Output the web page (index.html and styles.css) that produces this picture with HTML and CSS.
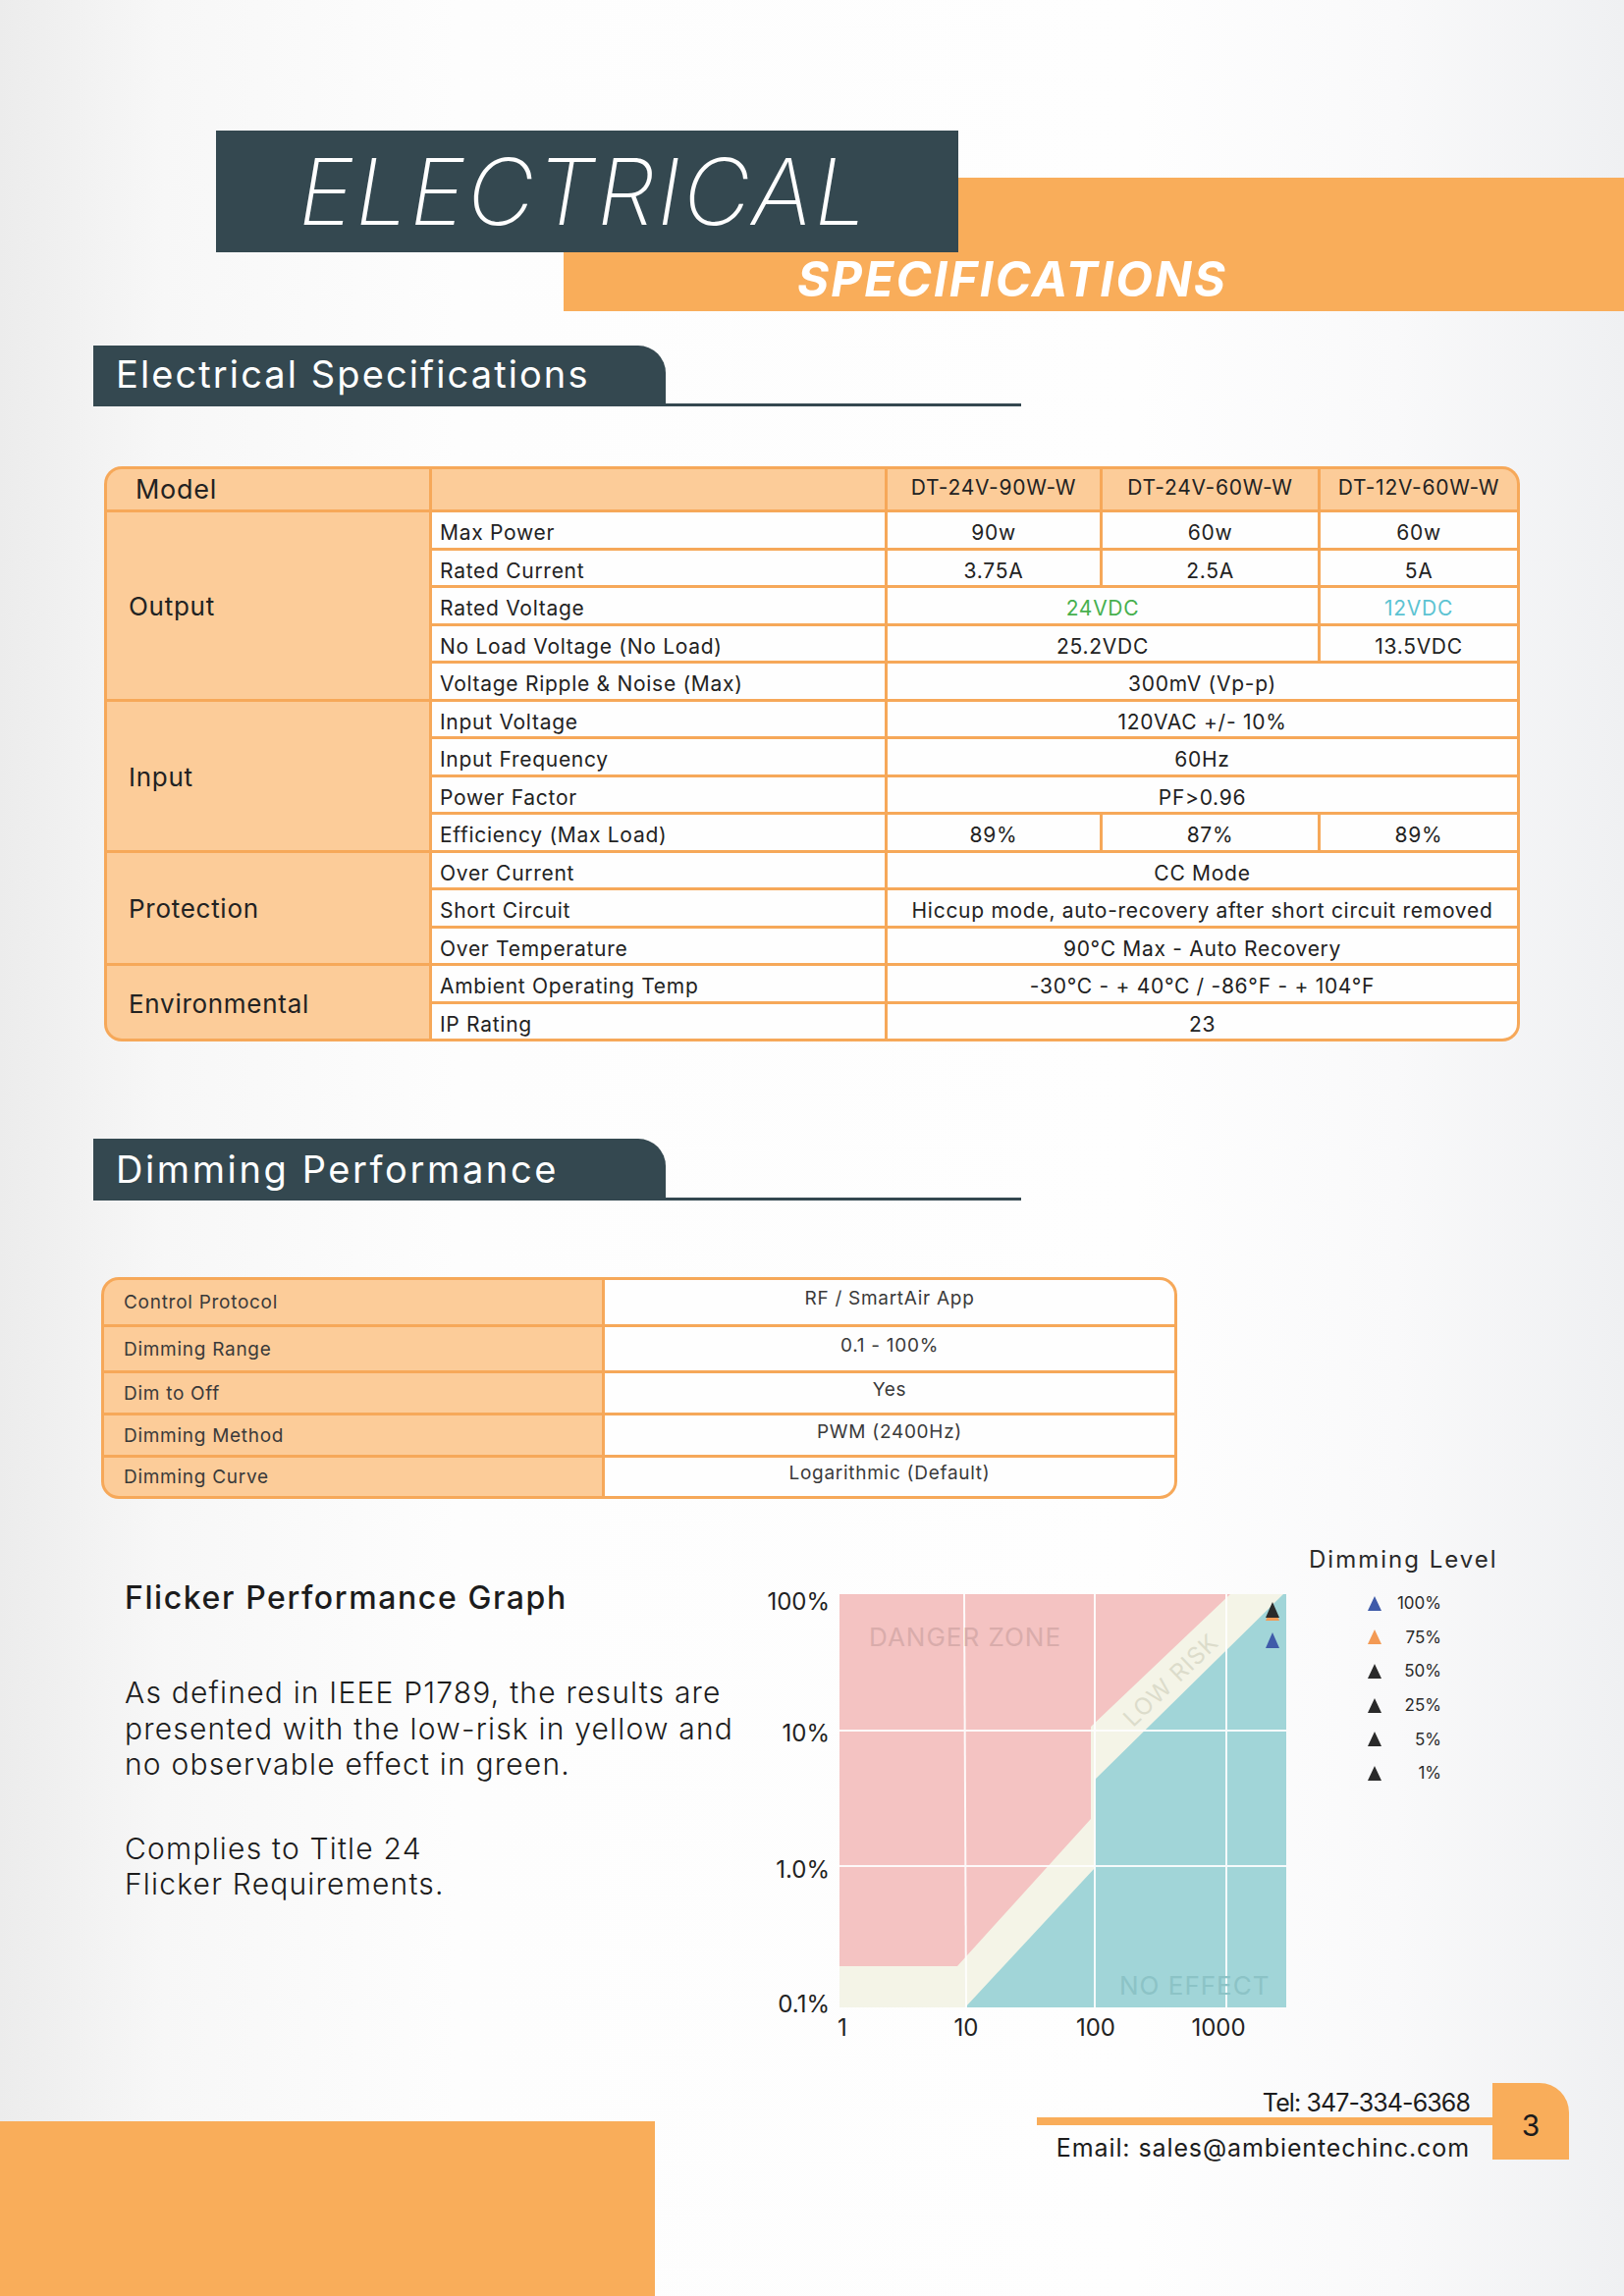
FILE: index.html
```html
<!DOCTYPE html>
<html lang="en">
<head>
<meta charset="utf-8">
<title>Electrical Specifications</title>
<link rel="stylesheet" href="styles.css">
</head>
<body>
<div class="page">
  <header class="hero">
    <div class="hero-dark"><h1 class="hero-title">ELECTRICAL</h1></div>
    <div class="hero-orange"><div class="hero-sub">SPECIFICATIONS</div></div>
  </header>

  <div class="sec-head sec-elec"><h2 class="sec-tab">Electrical Specifications</h2></div>

  <div class="spec">
    <div class="cell hd model tl">Model</div>
    <div class="cell hd"></div>
    <div class="cell hd">DT-24V-90W-W</div>
    <div class="cell hd">DT-24V-60W-W</div>
    <div class="cell hd tr">DT-12V-60W-W</div>

    <div class="cell cat r5">Output</div>
    <div class="cell par">Max Power</div>
    <div class="cell">90w</div><div class="cell">60w</div><div class="cell">60w</div>
    <div class="cell par">Rated Current</div>
    <div class="cell">3.75A</div><div class="cell">2.5A</div><div class="cell">5A</div>
    <div class="cell par">Rated Voltage</div>
    <div class="cell s2 green">24VDC</div><div class="cell cyan">12VDC</div>
    <div class="cell par">No Load Voltage (No Load)</div>
    <div class="cell s2">25.2VDC</div><div class="cell">13.5VDC</div>
    <div class="cell par">Voltage Ripple &amp; Noise (Max)</div>
    <div class="cell s3">300mV (Vp-p)</div>

    <div class="cell cat r4">Input</div>
    <div class="cell par">Input Voltage</div>
    <div class="cell s3">120VAC +/- 10%</div>
    <div class="cell par">Input Frequency</div>
    <div class="cell s3">60Hz</div>
    <div class="cell par">Power Factor</div>
    <div class="cell s3">PF&gt;0.96</div>
    <div class="cell par">Efficiency (Max Load)</div>
    <div class="cell">89%</div><div class="cell">87%</div><div class="cell">89%</div>

    <div class="cell cat r3">Protection</div>
    <div class="cell par">Over Current</div>
    <div class="cell s3">CC Mode</div>
    <div class="cell par">Short Circuit</div>
    <div class="cell s3">Hiccup mode, auto-recovery after short circuit removed</div>
    <div class="cell par">Over Temperature</div>
    <div class="cell s3">90°C Max - Auto Recovery</div>

    <div class="cell cat r2 bl">Environmental</div>
    <div class="cell par">Ambient Operating Temp</div>
    <div class="cell s3">-30°C - + 40°C / -86°F - + 104°F</div>
    <div class="cell par">IP Rating</div>
    <div class="cell s3 br">23</div>
  </div>

  <div class="sec-head sec-dim"><h2 class="sec-tab">Dimming Performance</h2></div>

  <div class="dim">
    <div class="dim-l tl">Control Protocol</div><div class="dim-v tr">RF / SmartAir App</div>
    <div class="dim-l">Dimming Range</div><div class="dim-v">0.1 - 100%</div>
    <div class="dim-l">Dim to Off</div><div class="dim-v">Yes</div>
    <div class="dim-l">Dimming Method</div><div class="dim-v">PWM (2400Hz)</div>
    <div class="dim-l bl">Dimming Curve</div><div class="dim-v br">Logarithmic (Default)</div>
  </div>

  <section class="flicker">
    <div class="flicker-text">
      <h3 class="flicker-title">Flicker Performance Graph</h3>
      <p class="flicker-p">As defined in IEEE P1789, the results are presented with the low-risk in yellow and no observable effect in green.</p>
      <p class="flicker-p flicker-p2">Complies to Title 24<br>Flicker Requirements.</p>
    </div>

    <svg class="chart" width="550" height="500" viewBox="0 0 550 500">
      <g transform="translate(85,44)">
        <rect width="455" height="421" fill="#f4f4e7"/>
        <polygon points="0,0 398,0 256,135 256,229 120,379 0,379" fill="#f4c3c2"/>
        <polygon points="128,421 260,279 260,189 452,0 455,0 455,421" fill="#a1d5d8"/>
        <g stroke="#ffffff" stroke-width="2" opacity="0.9">
          <line x1="127" y1="0" x2="129" y2="421"/>
          <line x1="260" y1="0" x2="260" y2="421"/>
          <line x1="394" y1="0" x2="394" y2="421"/>
          <line x1="0" y1="139" x2="455" y2="139"/>
          <line x1="0" y1="277" x2="455" y2="277"/>
        </g>
        <text class="zone zone-danger" x="30" y="53">DANGER ZONE</text>
        <text class="zone zone-no" x="285" y="408">NO EFFECT</text>
        <text class="zone zone-low" transform="translate(337,87) rotate(-44)" text-anchor="middle" dy="9">LOW RISK</text>
        <polygon points="441,12 434,27 448,27" fill="#f39a55"/>
        <polygon points="441,8 434,24 448,24" fill="#2a2a2a"/>
        <polygon points="441,39 434,55 448,55" fill="#3f5ba9"/>
      </g>
      <g class="axis">
        <text x="75" y="60" text-anchor="end">100%</text>
        <text x="75" y="194" text-anchor="end">10%</text>
        <text x="75" y="333" text-anchor="end">1.0%</text>
        <text x="75" y="470" text-anchor="end">0.1%</text>
        <text x="88" y="494" text-anchor="middle">1</text>
        <text x="214" y="494" text-anchor="middle">10</text>
        <text x="346" y="494" text-anchor="middle">100</text>
        <text x="471" y="494" text-anchor="middle">1000</text>
      </g>
    </svg>

    <div class="legend">
      <div class="legend-title">Dimming Level</div>
      <ul class="legend-list">
        <li class="legend-row"><span class="tri tri-blue"></span><span class="legend-val">100%</span></li>
        <li class="legend-row"><span class="tri tri-orange"></span><span class="legend-val">75%</span></li>
        <li class="legend-row"><span class="tri"></span><span class="legend-val">50%</span></li>
        <li class="legend-row"><span class="tri"></span><span class="legend-val">25%</span></li>
        <li class="legend-row"><span class="tri"></span><span class="legend-val">5%</span></li>
        <li class="legend-row"><span class="tri"></span><span class="legend-val">1%</span></li>
      </ul>
    </div>
  </section>

  <footer class="footer">
    <div class="foot-block"></div>
    <div class="contact">
      <div class="contact-info">
        <div class="tel">Tel: 347-334-6368</div>
        <div class="contact-line"></div>
        <div class="email">Email: sales@ambientechinc.com</div>
      </div>
      <div class="page-num">3</div>
    </div>
  </footer>
</div>
</body>
</html>
```

FILE: styles.css
```css
* { box-sizing: border-box; margin: 0; padding: 0; }

html, body { width: 1654px; height: 2339px; }

body {
  font-family: Inter, "Open Sans", sans-serif;
  color: #222;
  letter-spacing: 0.72px;
  background: linear-gradient(90deg, #ececec 0%, #f7f7f7 10%, #fdfdfd 28%, #fefefe 70%, #f9f9fa 86%, #eff0f2 100%);
  overflow: hidden;
}

.page {
  width: 1654px;
  height: 2339px;
  padding-top: 133px;
  display: flex;
  flex-direction: column;
}

/* ---------- hero ---------- */
.hero { display: flex; flex-direction: column; }

.hero-dark {
  position: relative;
  z-index: 1;
  margin-left: 220px;
  width: 756px;
  height: 124px;
  background: #344850;
  padding-left: 84px;
}

.hero-title {
  font-size: 94px;
  font-weight: 200;
  font-style: italic;
  line-height: 124px;
  letter-spacing: 2.6px;
  color: #fff;
}

.hero-orange {
  margin-left: 574px;
  margin-top: -76px;
  width: 1080px;
  height: 136px;
  background: #f9ad5a;
  padding: 74px 0 0 238px;
}

.hero-sub {
  font-size: 49px;
  line-height: 60px;
  font-weight: 700;
  font-style: italic;
  letter-spacing: 2.2px;
  color: #fff;
}

/* ---------- section heads ---------- */
.sec-head {
  margin-left: 95px;
  width: 945px;
  border-bottom: 3px solid #344850;
}

.sec-tab {
  width: 583px;
  height: 59px;
  background: #344850;
  border-top-right-radius: 28px;
  color: #fff;
  font-size: 38px;
  font-weight: 400;
  line-height: 59px;
  letter-spacing: 2.1px;
  padding-left: 23px;
}

.sec-elec { margin-top: 35px; }
.sec-dim { margin-top: 99px; }
.sec-dim .sec-tab { height: 60px; line-height: 62px; letter-spacing: 2.6px; }

/* ---------- spec table ---------- */
.spec {
  margin: 61px 0 0 106px;
  width: 1442px;
  display: grid;
  grid-template-columns: 328px 461px 216px 219px 200px;
  grid-template-rows: 41px repeat(14, 35.5px);
  gap: 3px;
  padding: 3px;
  background: #f6a859;
  border-radius: 18px;
}

.cell {
  background: #fefefe;
  display: flex;
  align-items: center;
  justify-content: center;
  padding-top: 6px;
  font-size: 21px;
  color: #222;
  white-space: nowrap;
}

.hd { background: #fccc99; padding-top: 0; padding-bottom: 4px; }
.model { justify-content: flex-start; padding-left: 29px; padding-bottom: 0; font-size: 27px; }
.cat { background: #fccc99; justify-content: flex-start; padding-left: 22px; padding-top: 2px; font-size: 26px; }
.par { justify-content: flex-start; padding-left: 8px; }

.r5 { grid-row: span 5; }
.r4 { grid-row: span 4; }
.r3 { grid-row: span 3; }
.r2 { grid-row: span 2; }
.s2 { grid-column: span 2; }
.s3 { grid-column: span 3; }

.green { color: #46b04e; }
.cyan { color: #5cc3d2; }

.tl { border-top-left-radius: 15px; }
.tr { border-top-right-radius: 15px; }
.bl { border-bottom-left-radius: 15px; }
.br { border-bottom-right-radius: 15px; }

/* ---------- dimming table ---------- */
.dim {
  margin: 78px 0 0 103px;
  width: 1096px;
  display: grid;
  grid-template-columns: 507px 580px;
  grid-template-rows: 45px 44px 40px 40px 39px;
  gap: 3px;
  padding: 3px;
  background: #f6a859;
  border-radius: 18px;
}

.dim-l {
  background: #fccc99;
  display: flex;
  align-items: center;
  padding-left: 20px;
  font-size: 19px;
  color: #3a3a3a;
}

.dim-v {
  background: #fefefe;
  display: flex;
  align-items: center;
  justify-content: center;
  padding-bottom: 8px;
  font-size: 19px;
  color: #3a3a3a;
}

/* ---------- flicker ---------- */
.flicker {
  margin-top: 33px;
  display: flex;
  align-items: flex-start;
}

.flicker-text {
  margin-left: 127px;
  width: 643px;
  padding-top: 48px;
}

.flicker-title {
  font-size: 32px;
  line-height: 40px;
  font-weight: 500;
  letter-spacing: 1.6px;
  color: #1c1c1c;
}

.flicker-p {
  margin-top: 58px;
  font-size: 30px;
  line-height: 36.5px;
  font-weight: 300;
  letter-spacing: 1.2px;
  color: #1c1c1c;
}

.flicker-p2 { margin-top: 49px; }

.chart { margin-top: 20px; flex: none; display: block; }

.zone { font-family: Inter, "Open Sans", sans-serif; font-size: 26px; font-weight: 400; letter-spacing: 1px; }
.zone-danger { fill: #d9acab; }
.zone-no { fill: #8cc3c6; }
.zone-low { fill: #dcdccb; font-size: 24px; }

.axis text { font-family: Inter, "Open Sans", sans-serif; font-size: 24px; fill: #222; letter-spacing: 0; }

.legend { margin: 14px 0 0 13px; }

.legend-title {
  font-size: 24px;
  line-height: 30px;
  letter-spacing: 2px;
  color: #2a2a2a;
}

.legend-list { list-style: none; margin-top: 12px; }

.legend-row {
  display: flex;
  align-items: center;
  width: 135px;
  height: 34.6px;
  padding-left: 60px;
}

.tri {
  width: 0;
  height: 0;
  border-left: 7px solid transparent;
  border-right: 7px solid transparent;
  border-bottom: 15px solid #2a2a2a;
}
.tri-blue { border-bottom-color: #3f5ba9; }
.tri-orange { border-bottom-color: #f39a55; }

.legend-val {
  flex: 1;
  text-align: right;
  font-size: 17px;
  letter-spacing: 0;
  color: #2a2a2a;
}

/* ---------- footer ---------- */
.footer {
  margin-top: auto;
  height: 217px;
  display: flex;
}

.foot-block {
  width: 667px;
  height: 178px;
  margin-top: 39px;
  background: #f9ad5a;
}

.contact {
  margin-left: 389px;
  display: flex;
  align-items: flex-start;
}

.contact-info {
  width: 464px;
  display: flex;
  flex-direction: column;
  align-items: flex-end;
}

.tel, .email {
  font-size: 25px;
  line-height: 30px;
  padding-right: 23px;
  color: #1c1c1c;
}

.tel { margin-top: 5px; letter-spacing: -0.9px; }
.email { margin-top: 8px; letter-spacing: 0.9px; }

.contact-line {
  align-self: stretch;
  height: 8px;
  background: #f9ad5a;
}

.page-num {
  width: 78px;
  height: 78px;
  background: #f9ad5a;
  border-top-right-radius: 30px;
  display: flex;
  align-items: center;
  justify-content: center;
  padding-top: 8px;
  font-size: 30px;
  letter-spacing: 0;
  color: #1c1c1c;
}
```
